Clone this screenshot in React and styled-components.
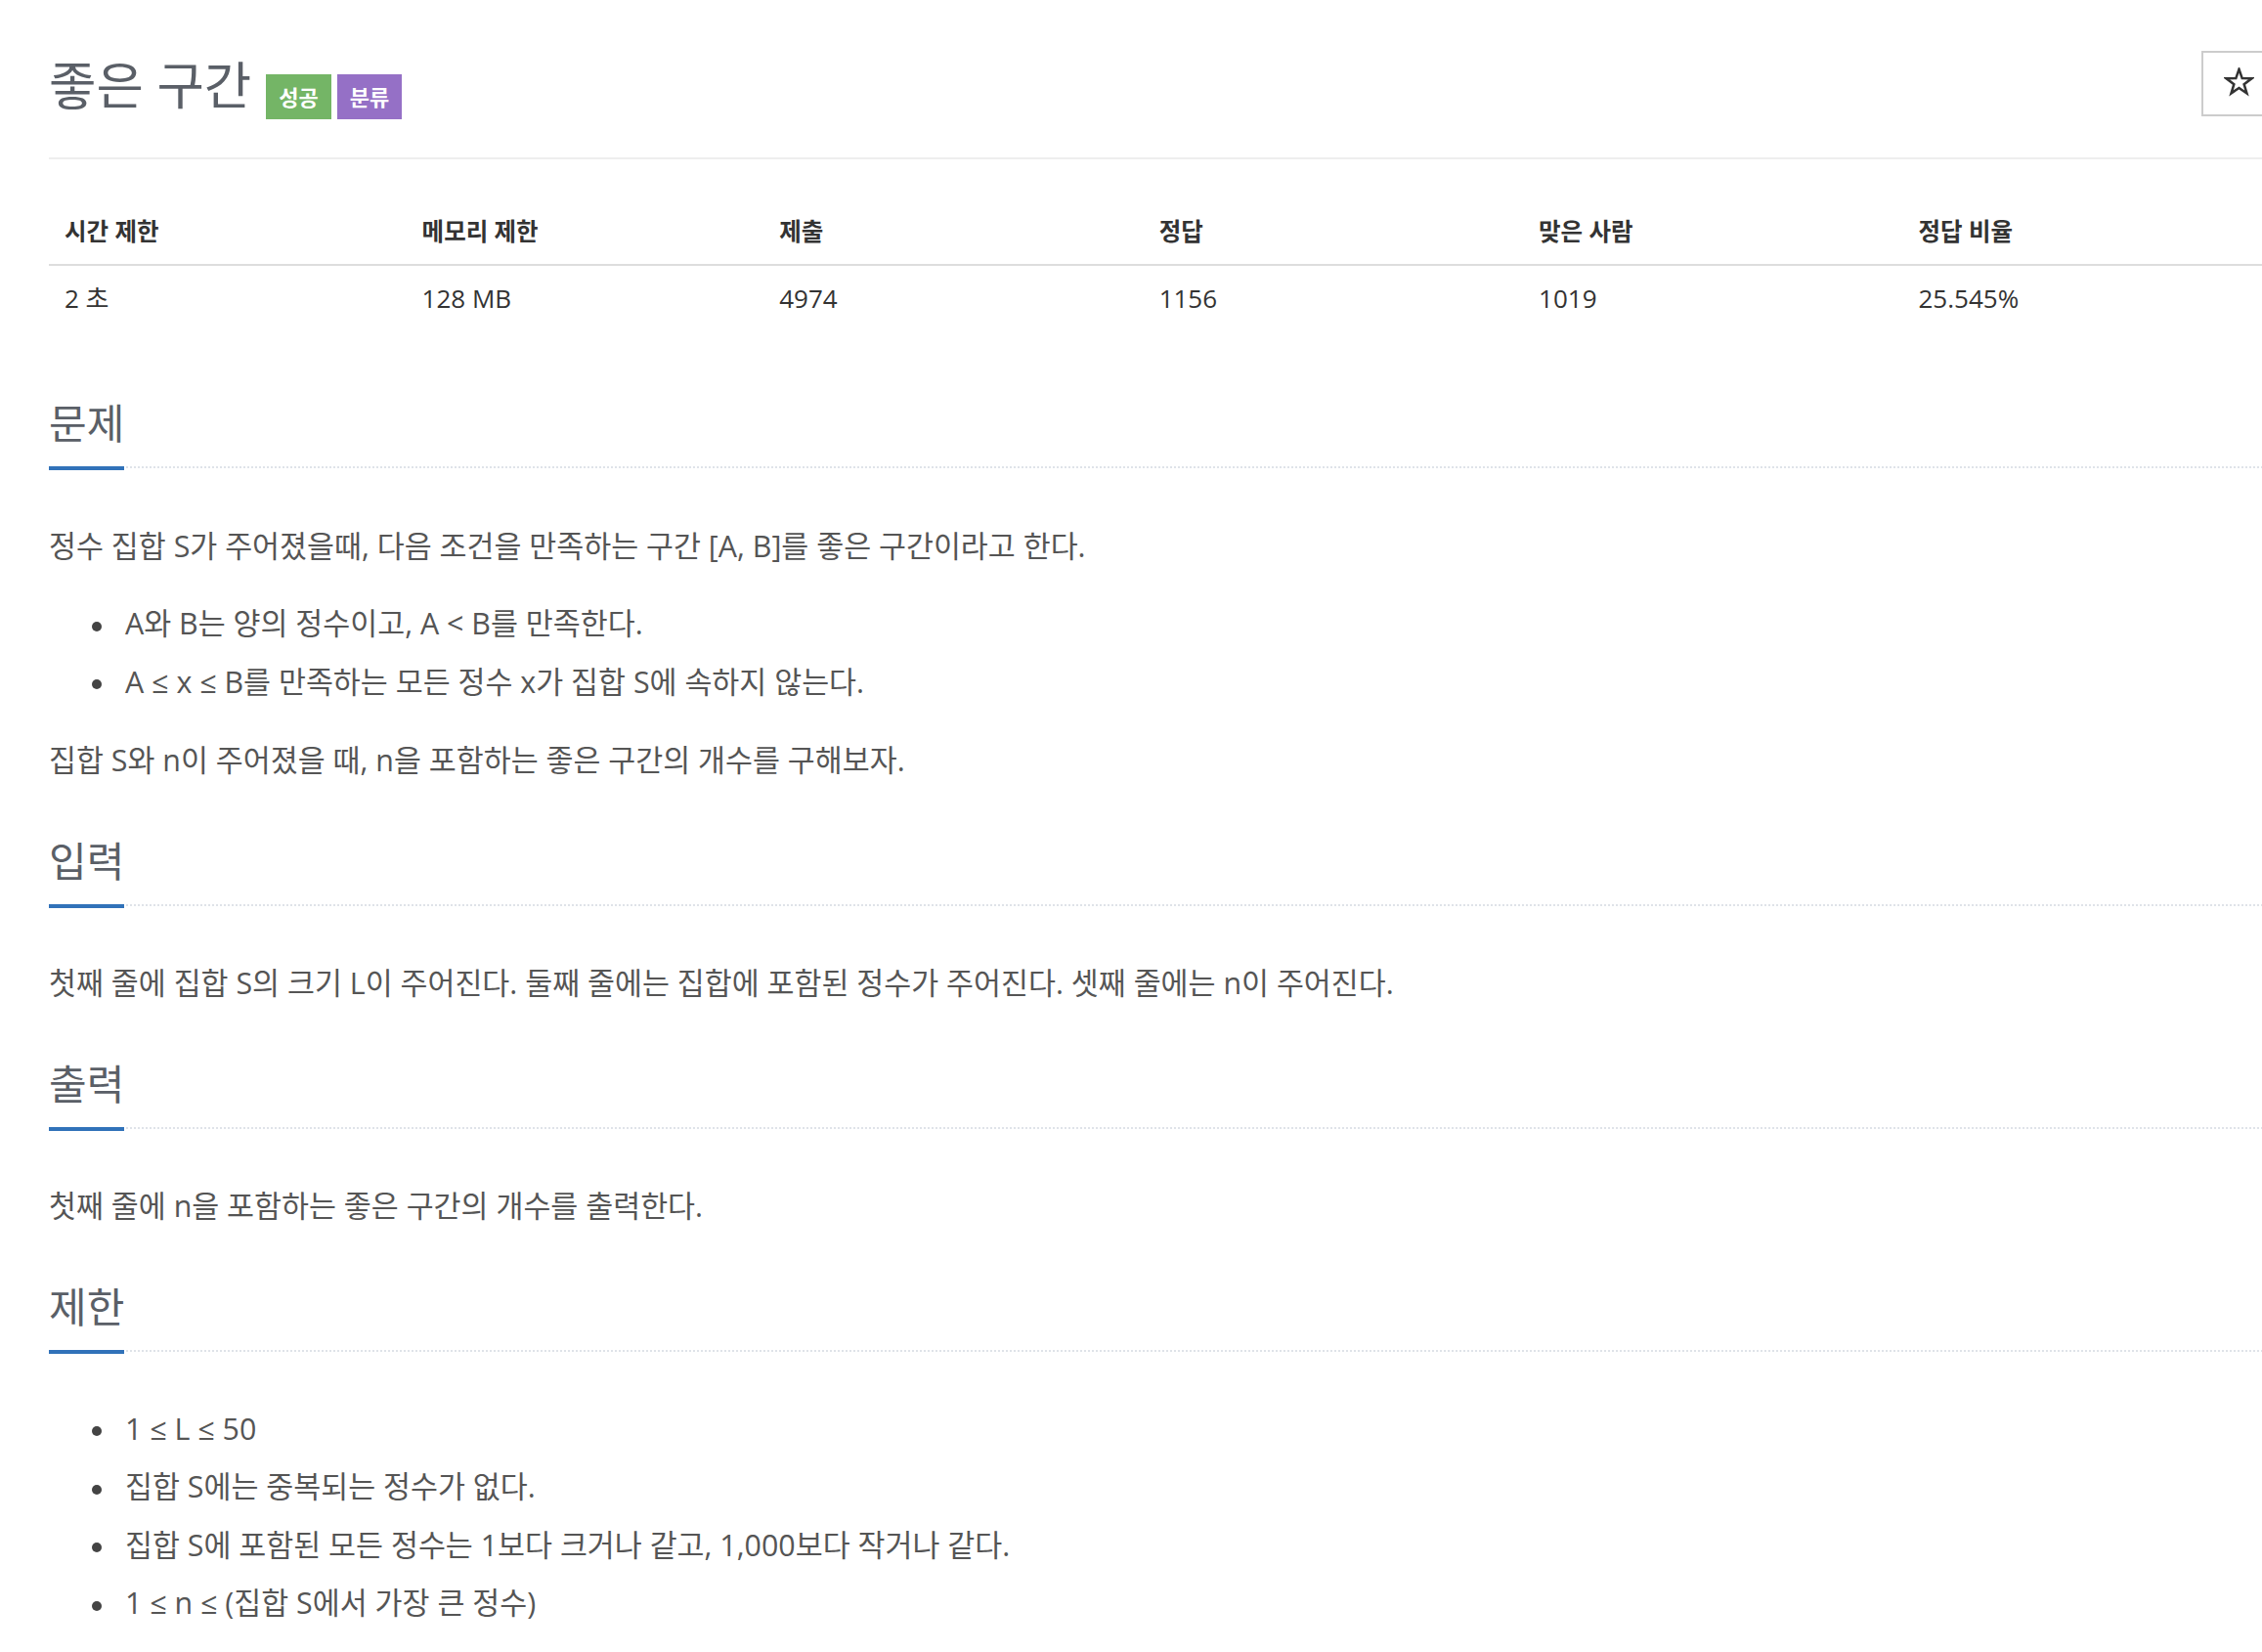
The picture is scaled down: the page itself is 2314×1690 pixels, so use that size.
import React from "react";
import styled, { createGlobalStyle } from "styled-components";

const GlobalStyle = createGlobalStyle`
  html, body {
    margin: 0;
    padding: 0;
    background: #fff;
    overflow: hidden;
  }
  body {
    font-family: "Open Sans", "Noto Sans CJK KR", sans-serif;
    color: #555;
  }
`;

const problem = {
  title: "좋은 구간",
  stats: [
    { label: "시간 제한", value: "2 초", width: 16 },
    { label: "메모리 제한", value: "128 MB", width: 16 },
    { label: "제출", value: "4974", width: 17 },
    { label: "정답", value: "1156", width: 17 },
    { label: "맞은 사람", value: "1019", width: 17 },
    { label: "정답 비율", value: "25.545%", width: 17 },
  ],
};

const Page = styled.div`
  width: 2285px;
  margin-left: 50px;
`;

const HeaderBar = styled.div`
  display: flex;
  justify-content: space-between;
  align-items: flex-start;
  padding: 51px 0 38px;
  border-bottom: 2px solid #eee;
`;

const TitleRow = styled.div`
  display: flex;
  align-items: flex-end;
  gap: 15px;
`;

const Title = styled.h1`
  margin: 0;
  font-size: 52.6px;
  line-height: 72px;
  font-weight: 400;
  color: #5a5f67;
`;

const Labels = styled.div`
  display: flex;
  gap: 6px;
  margin-bottom: 1px;
`;

const Label = styled.span`
  display: inline-block;
  padding: 0 13px;
  height: 46px;
  line-height: 46px;
  font-size: 22px;
  font-weight: 700;
  color: #fff;
  background: ${(p) => p.$bg};
`;

const StarButton = styled.button`
  display: flex;
  align-items: center;
  justify-content: center;
  margin: 1px 7px 0 0;
  width: 76px;
  height: 67px;
  border: 2px solid #ccc;
  background: #fff;
  padding: 0 0 3px;
  color: #333;
  cursor: pointer;
`;

const StatTable = styled.table`
  width: 100%;
  margin-top: 44px;
  border-collapse: collapse;
  table-layout: fixed;
  color: #333;

  th {
    text-align: left;
    padding: 14px 16px 18px;
    font-size: 24.5px;
    line-height: 31px;
    font-weight: 700;
    border-bottom: 2px solid #ddd;
  }

  td {
    padding: 15px 16px 19px;
    font-size: 26px;
    line-height: 36px;
  }
`;

const Section = styled.section`
  margin-top: ${(p) => p.$top}px;
`;

const Headline = styled.div`
  display: flex;
  align-items: flex-end;
  border-bottom: 2px dotted #dfe3e9;
`;

const HeadTitle = styled.h2`
  margin: 0 0 -4px;
  padding-bottom: 23px;
  font-size: 42px;
  line-height: 42px;
  font-weight: 400;
  color: #5a5f67;
  border-bottom: 4px solid #3172b9;
`;

const Body = styled.div`
  margin-top: ${(p) => p.$top || 57}px;
  font-size: 30.4px;
  line-height: 44px;

  p {
    margin: 0 0 35px;
  }

  ul {
    margin: 0 0 36px;
    padding-left: 78px;
    list-style: none;
  }

  li::before {
    content: "";
    display: inline-block;
    width: 10px;
    height: 10px;
    margin: 0 24px 0 -34px;
    border-radius: 50%;
    background: #444;
    vertical-align: middle;
  }

  li + li {
    margin-top: 15.5px;
  }

  & > :last-child {
    margin-bottom: 0;
  }
`;

const StarIcon = () => (
  <svg width="31" height="31" viewBox="-2 -2 32 32" fill="none">
    <polygon
      points="14,0 17.3,9.47 27.3,9.67 19.3,15.7 22.2,25.3 14,19.6 5.77,25.3 8.67,15.7 0.69,9.67 10.7,9.47"
      stroke="#333"
      strokeWidth="2.6"
      strokeLinejoin="miter"
    />
  </svg>
);

const ProblemSection = ({ title, top, bodyTop, children }) => (
  <Section $top={top}>
    <Headline>
      <HeadTitle>{title}</HeadTitle>
    </Headline>
    <Body $top={bodyTop}>{children}</Body>
  </Section>
);

export default function App() {
  return (
    <>
      <GlobalStyle />
      <Page>
        <HeaderBar>
          <TitleRow>
            <Title>{problem.title}</Title>
            <Labels>
              <Label $bg="#74b566">성공</Label>
              <Label $bg="#9570c6">분류</Label>
            </Labels>
          </TitleRow>
          <StarButton aria-label="즐겨찾기">
            <StarIcon />
          </StarButton>
        </HeaderBar>

        <StatTable>
          <colgroup>
            {problem.stats.map((s) => (
              <col key={s.label} style={{ width: `${s.width}%` }} />
            ))}
          </colgroup>
          <thead>
            <tr>
              {problem.stats.map((s) => (
                <th key={s.label}>{s.label}</th>
              ))}
            </tr>
          </thead>
          <tbody>
            <tr>
              {problem.stats.map((s) => (
                <td key={s.label}>{s.value}</td>
              ))}
            </tr>
          </tbody>
        </StatTable>

        <ProblemSection title="문제" top={70} bodyTop={58}>
          <p>정수 집합 S가 주어졌을때, 다음 조건을 만족하는 구간 [A, B]를 좋은 구간이라고 한다.</p>
          <ul>
            <li>A와 B는 양의 정수이고, A &lt; B를 만족한다.</li>
            <li>A ≤ x ≤ B를 만족하는 모든 정수 x가 집합 S에 속하지 않는다.</li>
          </ul>
          <p>집합 S와 n이 주어졌을 때, n을 포함하는 좋은 구간의 개수를 구해보자.</p>
        </ProblemSection>

        <ProblemSection title="입력" top={60}>
          <p>첫째 줄에 집합 S의 크기 L이 주어진다. 둘째 줄에는 집합에 포함된 정수가 주어진다. 셋째 줄에는 n이 주어진다.</p>
        </ProblemSection>

        <ProblemSection title="출력" top={60}>
          <p>첫째 줄에 n을 포함하는 좋은 구간의 개수를 출력한다.</p>
        </ProblemSection>

        <ProblemSection title="제한" top={60}>
          <ul>
            <li>1 ≤ L ≤ 50</li>
            <li>집합 S에는 중복되는 정수가 없다.</li>
            <li>집합 S에 포함된 모든 정수는 1보다 크거나 같고, 1,000보다 작거나 같다.</li>
            <li>1 ≤ n ≤ (집합 S에서 가장 큰 정수)</li>
          </ul>
        </ProblemSection>
      </Page>
    </>
  );
}
